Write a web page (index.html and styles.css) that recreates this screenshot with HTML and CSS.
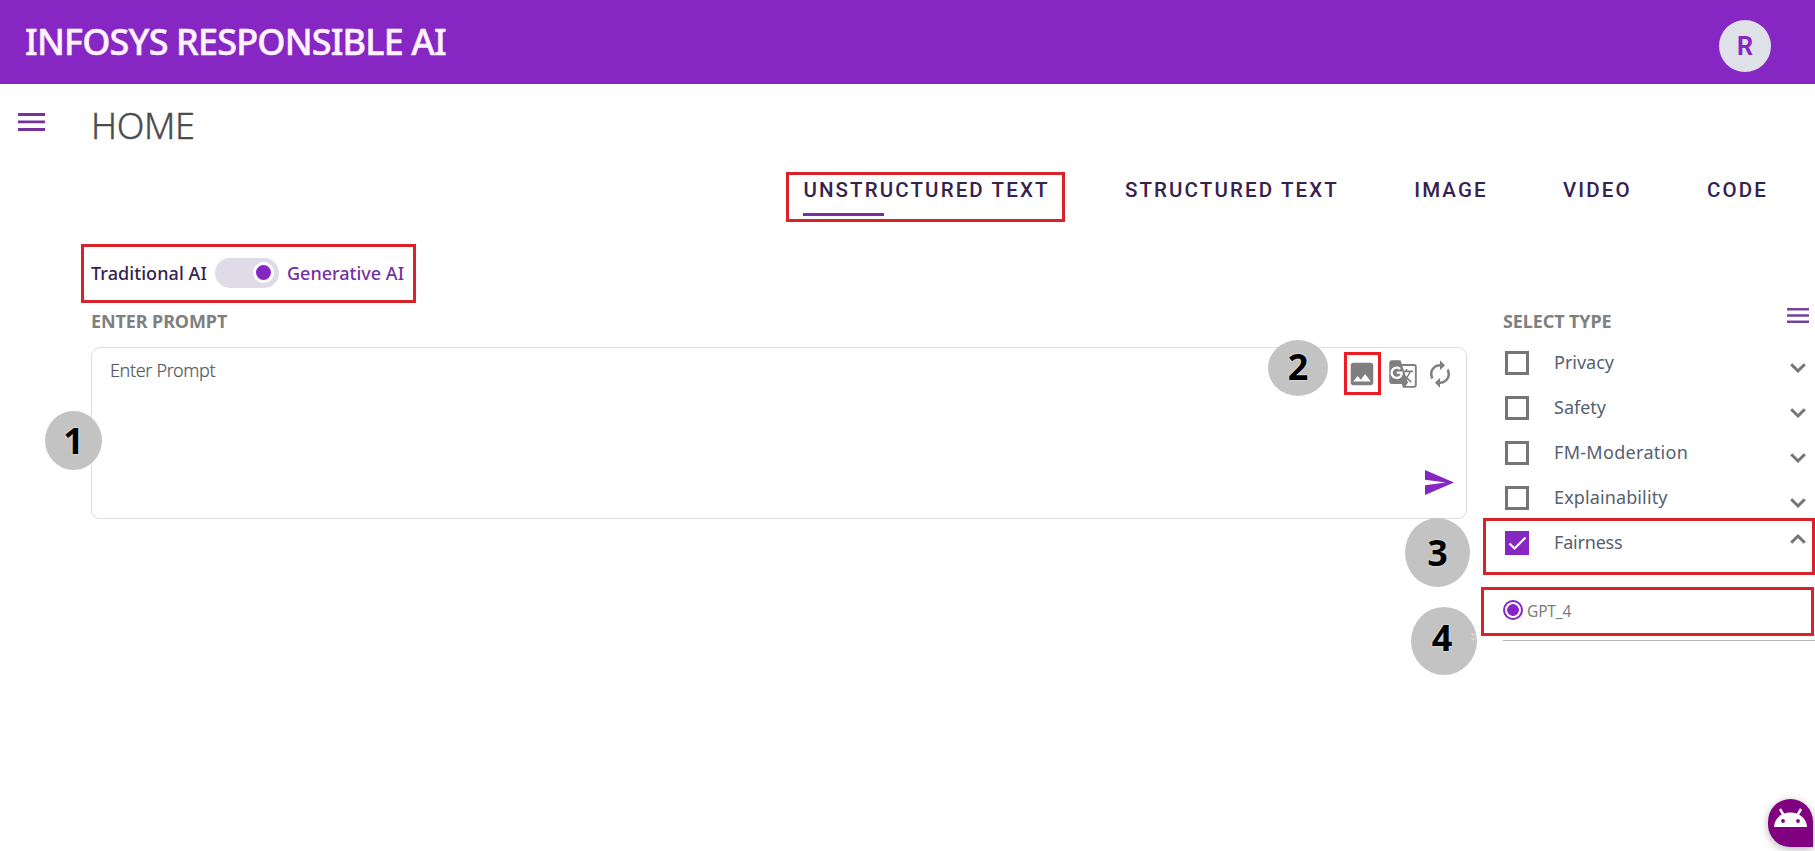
FILE: index.html
```html
<!DOCTYPE html>
<html lang="en">
<head>
<meta charset="utf-8">
<title>Infosys Responsible AI</title>
<link rel="stylesheet" href="styles.css">
</head>
<body>
<header class="topbar">
  <h1 class="brand">INFOSYS RESPONSIBLE AI</h1>
  <div class="avatar">R</div>
</header>
<div class="titlebar">
  <svg class="menu" viewBox="0 0 27 18"><path d="M0 0h27v3H0zM0 7.5h27v2.7H0zM0 15h27v3H0z"/></svg>
  <h2 class="page-title">HOME</h2>
</div>
<nav class="tabs">
  <a class="tab active">UNSTRUCTURED TEXT</a>
  <a class="tab">STRUCTURED TEXT</a>
  <a class="tab">IMAGE</a>
  <a class="tab">VIDEO</a>
  <a class="tab">CODE</a>
</nav>
<div class="content">
  <main class="main">
    <div class="mode">
      <span class="mode-off">Traditional AI</span>
      <span class="switch"><span class="knob"></span></span>
      <span class="mode-on">Generative AI</span>
    </div>
    <h3 class="heading heading-prompt">ENTER PROMPT</h3>
    <div class="prompt">
      <span class="placeholder">Enter Prompt</span>
      <div class="tools">
        <div class="tool-row">
          <svg class="tool" viewBox="0 0 24 24"><path d="M21 19V5c0-1.100-.9-2-2-2H5c-1.100 0-2 .9-2 2v14c0 1.100.9 2 2 2h14c1.100 0 2-.9 2-2zM8.500 13.500l2.500 3.010L14.500 12l4.500 6H5l3.500-4.500z"/></svg>
          <svg class="tool tool-translate" viewBox="0 0 24 24"><path d="M21 4H11l-1-3H3c-1.100 0-2 .9-2 2v15c0 1.100.9 2 2 2h8l1 3h9c1.100 0 2-.9 2-2V6c0-1.100-.9-2-2-2zM7 16c-2.760 0-5-2.240-5-5s2.240-5 5-5c1.350 0 2.480.5 3.350 1.300L9.030 8.570c-.38-.36-1.040-.78-2.030-.78-1.740 0-3.150 1.440-3.150 3.210S5.260 14.210 7 14.210c2.010 0 2.840-1.440 2.920-2.410H7v-1.710h4.680c.07.31.12.61.12 1.020C11.800 13.970 9.890 16 7 16zm6.170-5.420h3.700c-.43 1.250-1.110 2.430-2.050 3.470-.31-.35-.6-.72-.86-1.100l-.79-2.370zm8.330 9.920c0 .55-.45 1-1 1H14l2-2.500-1.040-3.100 3.100 3.100.92-.92-3.300-3.250.02-.02c1.130-1.250 1.930-2.690 2.400-4.220H20v-1.300h-4.530V8h-1.290v1.290h-1.440L11.460 5.500h9.040c.55 0 1 .45 1 1v14z"/></svg>
          <svg class="tool tool-renew" viewBox="0 0 24 24"><path d="M12 6v3l4-4-4-4v3c-4.420 0-8 3.580-8 8 0 1.570.46 3.030 1.240 4.260L6.700 14.800c-.45-.83-.7-1.790-.7-2.800 0-3.310 2.690-6 6-6zm6.760 1.740L17.300 9.200c.44.840.7 1.790.7 2.800 0 3.310-2.690 6-6 6v-3l-4 4 4 4v-3c4.420 0 8-3.580 8-8 0-1.570-.46-3.030-1.240-4.260z"/></svg>
        </div>
        <svg class="send" viewBox="2 3 21 18" preserveAspectRatio="none"><path d="M2.010 21L23 12 2.010 3 2 10l15 2-15 2z"/></svg>
      </div>
    </div>
  </main>
  <aside class="side">
    <div class="side-head">
      <h3 class="heading">SELECT TYPE</h3>
      <svg class="menu-small" viewBox="0 0 22 15"><path d="M0 0h22v2.500H0zM0 6.300h22v2.500H0zM0 12.500h22V15H0z"/></svg>
    </div>
    <div class="option"><span class="check"></span><span class="label">Privacy</span><svg class="chevron" viewBox="0 0 16 10"><path d="M1.200 1.200 8 8l6.800-6.800"/></svg></div>
    <div class="option"><span class="check"></span><span class="label">Safety</span><svg class="chevron" viewBox="0 0 16 10"><path d="M1.200 1.200 8 8l6.800-6.800"/></svg></div>
    <div class="option"><span class="check"></span><span class="label label-wide">FM-Moderation</span><svg class="chevron" viewBox="0 0 16 10"><path d="M1.200 1.200 8 8l6.800-6.800"/></svg></div>
    <div class="option"><span class="check"></span><span class="label label-mid">Explainability</span><svg class="chevron" viewBox="0 0 16 10"><path d="M1.200 1.200 8 8l6.800-6.800"/></svg></div>
    <div class="option"><span class="check checked"><svg viewBox="0 0 24 24"><path d="M4.500 12.500l5 5L20.500 6.500"/></svg></span><span class="label label-narrow">Fairness</span><svg class="chevron up" viewBox="0 0 16 10"><path d="M1.200 8.800 8 2l6.800 6.800"/></svg></div>
    <div class="model"><span class="radio"></span><span class="model-name">GPT_4</span></div>
  </aside>
</div>

<div class="frame frame-tab"></div>
<div class="frame frame-mode"></div>
<div class="frame frame-image"></div>
<div class="frame frame-fairness"></div>
<div class="frame frame-model"></div>
<div class="step step-1">1</div>
<div class="step step-2">2</div>
<div class="step step-3">3</div>
<div class="step step-4">4<svg class="step-mark" viewBox="0 0 6 10"><path d="M1 1l1 2M5 2 4 4M1 7l2 2 2-2"/></svg></div>
<div class="bot">
  <svg viewBox="0 0 45 48"><path class="antenna" d="M12 10l3.500 6M33 10l-3.500 6"/><path class="head" d="M6 28c.4-9 8-14.500 16.500-14.500S38.600 19 39 28z"/><circle cx="15" cy="22" r="1.900"/><circle cx="30" cy="22" r="1.900"/></svg>
</div>
</body>
</html>
```
FILE: styles.css
```css
* { box-sizing: border-box; }
body {
  margin: 0;
  height: 851px;
  overflow: hidden;
  position: relative;
  background: #fff;
  font-family: "Noto Sans", "Open Sans", sans-serif;
}
h1, h2, h3 { margin: 0; }
svg { display: block; flex: none; }
span, a, h1, h2, h3 { white-space: nowrap; }

.topbar {
  height: 84px;
  background: #8626c3;
  display: flex;
  justify-content: space-between;
  align-items: flex-start;
  padding: 20px 44px 0 25px;
}
.brand {
  color: #fdf2ff;
  font-size: 36px;
  line-height: 44px;
  font-weight: 500;
  letter-spacing: -0.85px;
  -webkit-text-stroke: 0.5px #fdf2ff;
}
.avatar {
  width: 52px;
  height: 52px;
  border-radius: 50%;
  background: #dee2e8;
  color: #8626c3;
  font: 700 25px/53px Roboto, sans-serif;
  text-align: center;
}

.titlebar { height: 76px; display: flex; padding-left: 18px; }
.menu { width: 27px; height: 18px; margin-top: 29px; fill: #76309f; }
.page-title {
  margin: 20px 0 0 46px;
  font-size: 36px;
  line-height: 44px;
  font-weight: 300;
  color: #4c4c4c;
  letter-spacing: -0.4px;
  -webkit-text-stroke: 0.4px #4c4c4c;
}

.tabs {
  height: 84px;
  display: flex;
  justify-content: flex-end;
  gap: 75.3px;
  padding: 18px 47px 0 0;
}
.tab {
  height: 38px;
  font: 500 20.500px/24px Roboto, sans-serif;
  letter-spacing: 2.120px;
  color: #35224f;
}
.tab.active::after {
  content: "";
  display: block;
  width: 81px;
  height: 3px;
  margin-top: 11px;
  background: #76309f;
}

.content { display: flex; gap: 36px; padding-left: 91px; }
.main { width: 1376px; flex: none; }
.mode {
  height: 58px;
  display: flex;
  align-items: center;
  font-size: 18px;
  font-weight: 500;
}
.mode-off { width: 124px; color: #35224f; letter-spacing: 0.080px; }
.mode-on { margin-left: 8px; color: #76309f; }
.switch {
  width: 64px;
  height: 30px;
  border-radius: 15px;
  background: #dfdbe9;
  display: flex;
  justify-content: flex-end;
  padding: 4px 5px 0 0;
}
.knob {
  width: 21px;
  height: 21px;
  border-radius: 50%;
  border: 3px solid #fff;
  background: #8626c3;
}
.heading {
  font-size: 18px;
  line-height: 24px;
  font-weight: 700;
  color: #808080;
  letter-spacing: -0.100px;
}
.heading-prompt { margin: 7px 0 0; height: 38px; }
.prompt {
  height: 172px;
  border: 1px solid #ddd;
  border-radius: 9px;
  display: flex;
  justify-content: space-between;
}
.placeholder {
  margin: 10px 0 0 18px;
  font-size: 18px;
  line-height: 24px;
  font-weight: 300;
  color: #555b60;
  letter-spacing: -0.350px;
  -webkit-text-stroke: 0.2px #555b60;
}
.tools {
  display: flex;
  flex-direction: column;
  justify-content: space-between;
  align-items: flex-end;
  padding: 11px 11px 23px 0;
}
.tool-row { display: flex; align-items: center; }
.tool { width: 30px; height: 30px; fill: #7f7f7f; }
.tool-translate { margin-left: 11px; }
.tool-renew { margin-left: 7px; }
.send { width: 29px; height: 25px; margin-right: 1px; fill: #8626c3; }

.side { flex: 1; padding-top: 64px; }
.side-head { display: flex; justify-content: space-between; padding: 1px 6px 0 0; height: 32px; }
.menu-small { width: 22px; height: 15px; margin-top: -1px; fill: #76409f; }
.option { height: 45px; display: flex; align-items: center; padding: 0 9px 0 2px; }
.check { width: 24px; height: 24px; border: 3px solid #757575; }
.check.checked { border: 0; background: #8626c3; }
.checked path { fill: none; stroke: #fff; stroke-width: 2.200; }
.label {
  margin: -2px 0 0 25px;
  flex: 1;
  font-size: 18px;
  line-height: 24px;
  color: #566070;
}
.label-wide { letter-spacing: 0.300px; }
.label-mid { letter-spacing: 0.120px; }
.label-narrow { letter-spacing: -0.200px; }
.chevron { width: 16px; height: 10px; margin-top: 10px; overflow: visible; }
.chevron.up { margin-top: -8px; }
.chevron path { fill: none; stroke: #757575; stroke-width: 3; }
.model {
  height: 76px;
  display: flex;
  padding-top: 35px;
  border-bottom: 1px solid #b5b5b5;
}
.radio {
  width: 20px;
  height: 20px;
  border-radius: 50%;
  border: 2px solid #8626c3;
  background: radial-gradient(circle, #8626c3 5.500px, #fff 6.200px);
}
.model-name { margin-left: 4px; font-size: 15.500px; line-height: 22px; color: #7d7d7d; letter-spacing: -0.150px; }

/* Tutorial callouts laid over the page */
.frame { position: absolute; border: 3px solid #d8232a; }
.frame-tab { left: 786px; top: 172px; width: 279px; height: 50px; }
.frame-mode { left: 81px; top: 244px; width: 335px; height: 59px; }
.frame-image { left: 1344px; top: 352px; width: 37px; height: 43px; border-color: #ed1c24; }
.frame-fairness { left: 1483px; top: 518px; width: 332px; height: 57px; }
.frame-model { left: 1481px; top: 587px; width: 333px; height: 49px; }
.step {
  position: absolute;
  border-radius: 50%;
  background: #c3c3c3;
  color: #000;
  font-size: 36px;
  font-weight: 700;
  text-align: center;
  text-shadow: 0 0 2px #fff;
}
.step-1 { left: 45px; top: 411px; width: 57px; height: 59px; line-height: 60px; }
.step-2 { left: 1268px; top: 340px; width: 60px; height: 56px; line-height: 54px; }
.step-3 { left: 1405px; top: 518px; width: 65px; height: 69px; line-height: 70px; }
.step-4 { left: 1411px; top: 607px; width: 66px; height: 68px; line-height: 62px; padding-right: 4px; }
.step-mark { position: absolute; right: 1px; top: 25px; width: 5px; height: 9px; }
.step-mark path { fill: none; stroke: #fff; }
.bot {
  position: absolute;
  left: 1768px;
  top: 799px;
  width: 45px;
  height: 48px;
  background: #800080;
  border-radius: 24px 24px 0 24px;
  box-shadow: 0 2px 8px rgba(0, 0, 0, .3);
}
.bot svg { width: 45px; height: 48px; }
.bot circle { fill: #800080; }
.head { fill: #fff; }
.antenna { stroke: #fff; stroke-width: 2.500; }
```
